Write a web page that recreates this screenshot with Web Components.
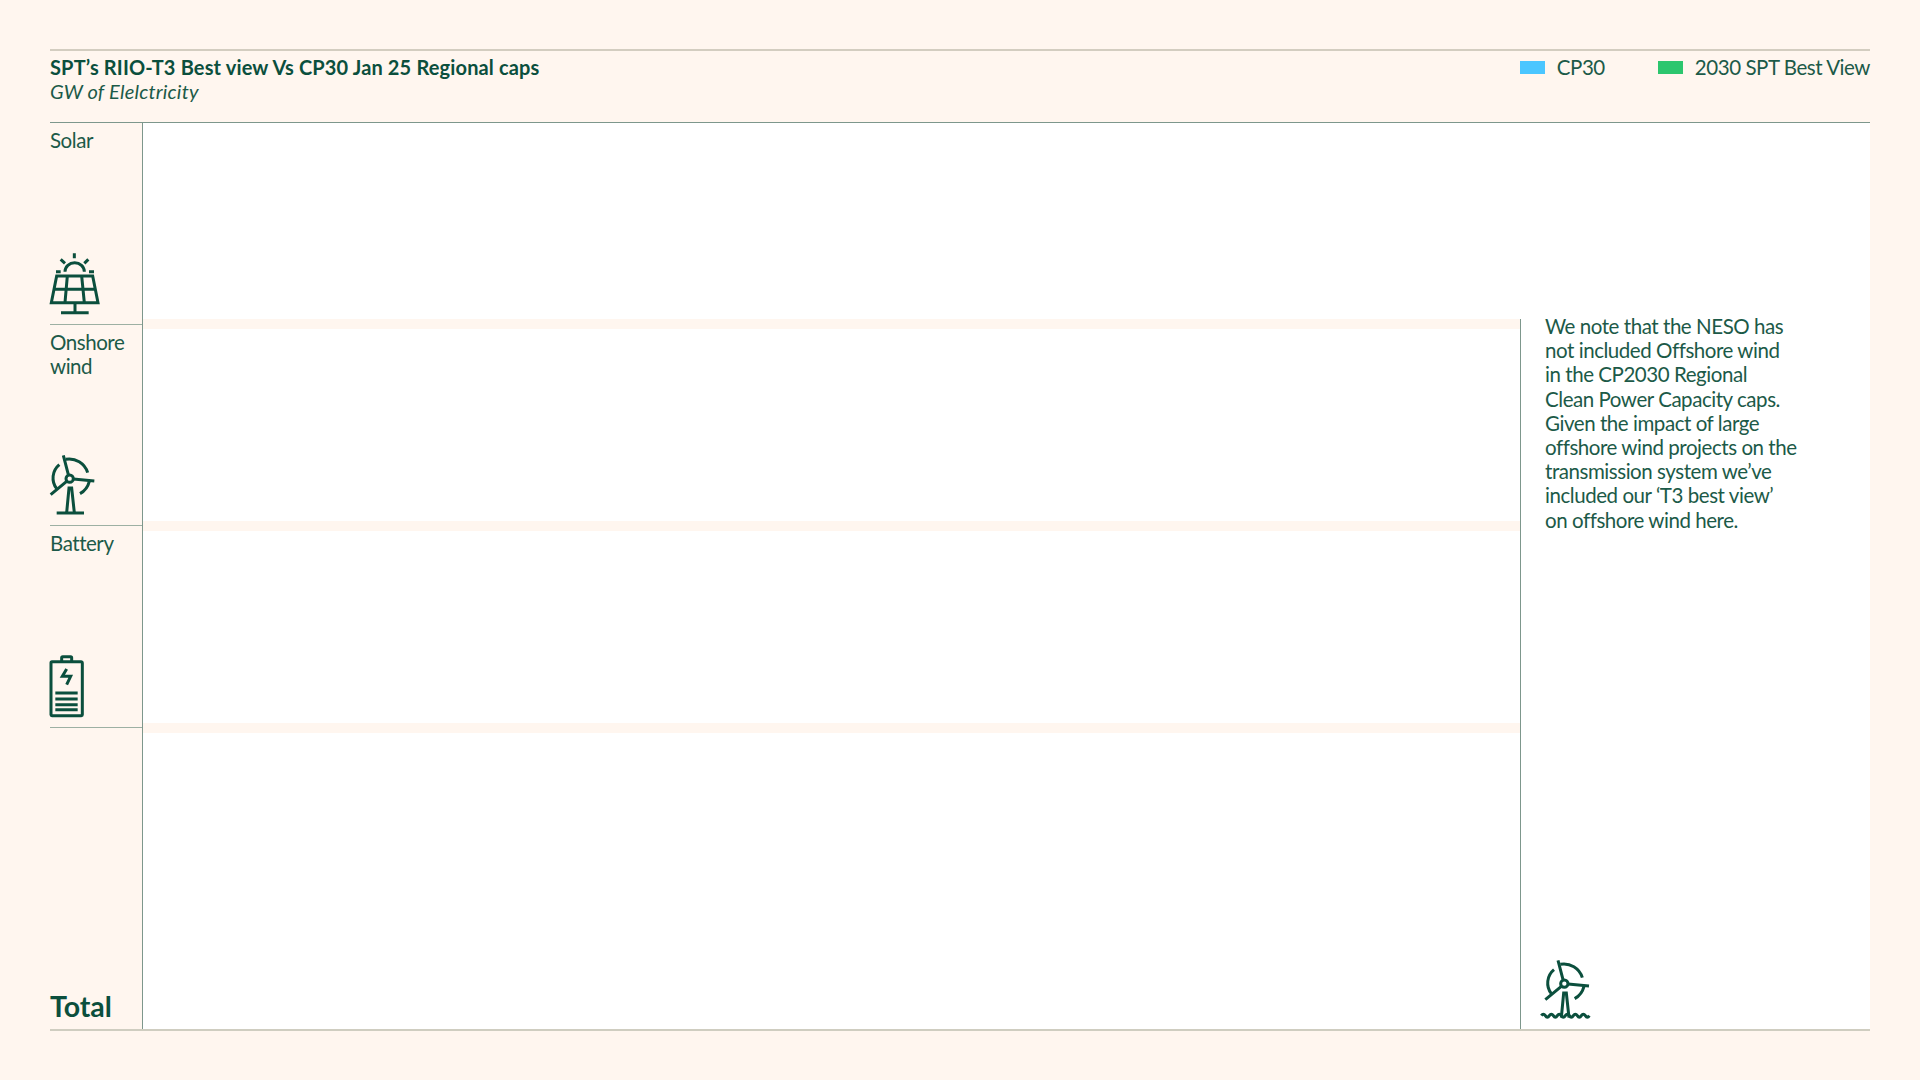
<!DOCTYPE html>
<html lang="en">
<head>
<meta charset="utf-8">
<title>SPT RIIO-T3 Best view vs CP30</title>
<style>
  html, body { margin: 0; height: 100%; }
  body {
    background: #fff6ef;
    color: #1c5a48;
    font-family: "Lato", "Liberation Sans", sans-serif;
    font-size: 20.5px;
    letter-spacing: -0.45px;
    line-height: 24.2px;
  }
</style>
</head>
<body>
<chart-page>
  <chart-header slot="header" title="SPT’s RIIO-T3 Best view Vs CP30 Jan 25 Regional caps" subtitle="GW of Elelctricity">
    <legend-item color="#4bc6ff">CP30</legend-item>
    <legend-item color="#2cc66e">2030 SPT Best View</legend-item>
  </chart-header>
  <row-label slot="labels">Solar<chart-icon slot="icon" name="solar"></chart-icon></row-label>
  <row-label slot="labels">Onshore<br>wind<chart-icon slot="icon" name="wind"></chart-icon></row-label>
  <row-label slot="labels">Battery<chart-icon slot="icon" name="battery"></chart-icon></row-label>
  <row-label slot="labels" total>Total</row-label>
  <side-note slot="note">
    We note that the NESO has<br>
    not included Offshore wind<br>
    in the CP2030 Regional<br>
    Clean Power Capacity caps.<br>
    Given the impact of large<br>
    offshore wind projects on the<br>
    transmission system we’ve<br>
    included our ‘T3 best view’<br>
    on offshore wind here.
    <chart-icon slot="icon" name="offshore"></chart-icon>
  </side-note>
</chart-page>

<script>
const windStrokes = `
  <circle cx="119" cy="120" r="11"/>
  <path d="M115 108 100 50M130 121 193 127M110 128 62 168"/>
  <path d="M107 62A58 58 0 0 1 173 102M88 78A52 52 0 0 0 80 150M178 128A59 59 0 0 1 150 165"/>
  <path d="M110 222 117 148H125L133 222"/>`;

const icons = {
  solar: {
    box: "60 36 150 186",
    body: `
      <path d="M133 40V55M92 58 105 70M175 58 163 70M78 95H92M177 95H192"/>
      <path d="M105 95A29 27 0 0 1 163 95"/>
      <path d="M80 108H188L204 188H64ZM72 148H196M112 108 105 188M155 108 163 188"/>
      <path d="M135 188V218M93 218H176"/>`,
  },
  wind: {
    box: "60 46 136 182",
    body: `${windStrokes}<path d="M80 223H162"/>`,
  },
  battery: {
    box: "60 48 100 185",
    body: `
      <rect x="63" y="68" width="94" height="162" rx="3"/>
      <path d="M95 68V56Q95 53 98 53H122Q125 53 125 56V68"/>
      <path d="M110 90 97 112H122L110 137"/>
      <path d="M76 162H143M76 180H143M76 197H143M76 212H143"/>`,
  },
  offshore: {
    box: "122 58 150 178",
    body: `
      <g transform="translate(76 12)">${windStrokes}</g>
      <path d="M126 228q6 -9 12 0t12 0 12 0 12 0 12 0 12 0 12 0 12 0 12 0 12 0 12 0 12 0"/>`,
  },
};

class ChartIcon extends HTMLElement {
  connectedCallback() {
    const icon = icons[this.getAttribute("name")];
    const [, , w, h] = icon.box.split(" ").map(Number);
    this.attachShadow({ mode: "open" });
    this.shadowRoot.innerHTML = `
      <style>
        :host { display: block; }
        svg {
          display: block;
          overflow: visible;
          fill: none;
          stroke: #0b4f3d;
          stroke-width: 9;
        }
      </style>
      <svg viewBox="${icon.box}" width="${w / 3}" height="${h / 3}">${icon.body}</svg>
    `;
  }
}

class LegendItem extends HTMLElement {
  constructor() {
    super();
    this.attachShadow({ mode: "open" });
    this.shadowRoot.innerHTML = `
      <style>
        :host { display: flex; align-items: center; gap: 12px; }
        .swatch { width: 25px; height: 13px; }
      </style>
      <span class="swatch"></span><slot></slot>
    `;
  }

  connectedCallback() {
    this.shadowRoot.querySelector(".swatch").style.background = this.getAttribute("color");
  }
}

class ChartHeader extends HTMLElement {
  constructor() {
    super();
    this.attachShadow({ mode: "open" });
    this.shadowRoot.innerHTML = `
      <style>
        :host {
          display: flex;
          justify-content: space-between;
          align-items: flex-start;
          height: 73px;
          box-sizing: border-box;
          padding-top: 4px;
          border-top: 2px solid #d3cdc0;
        }
        .title { color: #0b4f3d; font-size: 20px; font-weight: 700; letter-spacing: 0.15px; }
        .subtitle { font-size: 20px; font-style: italic; letter-spacing: 0.2px; }
        .legend { display: flex; gap: 53px; }
      </style>
      <div>
        <div class="title"></div>
        <div class="subtitle"></div>
      </div>
      <div class="legend"><slot></slot></div>
    `;
  }

  connectedCallback() {
    this.shadowRoot.querySelector(".title").textContent = this.getAttribute("title");
    this.shadowRoot.querySelector(".subtitle").textContent = this.getAttribute("subtitle");
    this.removeAttribute("title");
  }
}

class RowLabel extends HTMLElement {
  constructor() {
    super();
    this.attachShadow({ mode: "open" });
    this.shadowRoot.innerHTML = `
      <style>
        :host {
          display: flex;
          flex-direction: column;
          justify-content: space-between;
          box-sizing: border-box;
          padding: 5px 0 10px;
          border-bottom: 1px solid #9db0a3;
        }
        :host([total]) {
          justify-content: flex-end;
          border-bottom: 0;
          padding-bottom: 11px;
          color: #0b4f3d;
          font-size: 28.5px;
          font-weight: 700;
          letter-spacing: 0;
        }
      </style>
      <div><slot></slot></div>
      <slot name="icon"></slot>
    `;
  }
}

class SideNote extends HTMLElement {
  constructor() {
    super();
    this.attachShadow({ mode: "open" });
    this.shadowRoot.innerHTML = `
      <style>
        :host {
          display: flex;
          flex-direction: column;
          justify-content: space-between;
          box-sizing: border-box;
          height: 100%;
          padding: 0 0 11px 24px;
          border-left: 1px solid #7d978c;
        }
        .text { margin-top: -5px; }
        ::slotted(chart-icon) { margin-left: -5px; }
      </style>
      <div class="text"><slot></slot></div>
      <slot name="icon"></slot>
    `;
  }
}

class PlotBands extends HTMLElement {
  constructor() {
    super();
    this.attachShadow({ mode: "open" });
    this.shadowRoot.innerHTML = `
      <style>
        :host { display: flex; flex-direction: column; gap: 192px; }
        div { height: 10px; background: #fff6ef; }
      </style>
      <div></div><div></div><div></div>
    `;
  }
}

class ChartPage extends HTMLElement {
  constructor() {
    super();
    this.attachShadow({ mode: "open" });
    this.shadowRoot.innerHTML = `
      <style>
        :host {
          display: block;
          box-sizing: border-box;
          height: 1080px;
          padding: 49px 50px 0;
        }
        .body {
          display: grid;
          grid-template-columns: 92px 1fr;
          height: 909px;
          box-sizing: border-box;
          border-top: 1px solid #7d978c;
          border-bottom: 2px solid #cfcdc0;
        }
        .labels {
          display: grid;
          grid-template-rows: 202px 201px 202px 1fr;
        }
        .panel {
          display: grid;
          grid-template-columns: 1fr 350px;
          grid-template-rows: 196px 1fr;
          background: #fff;
          border-left: 1px solid #7d978c;
        }
        plot-bands { grid-row: 2; grid-column: 1; }
        .note { grid-row: 2; grid-column: 2; min-height: 0; }
      </style>
      <slot name="header"></slot>
      <div class="body">
        <div class="labels"><slot name="labels"></slot></div>
        <div class="panel">
          <plot-bands></plot-bands>
          <div class="note"><slot name="note"></slot></div>
        </div>
      </div>
    `;
  }
}

customElements.define("chart-icon", ChartIcon);
customElements.define("legend-item", LegendItem);
customElements.define("chart-header", ChartHeader);
customElements.define("row-label", RowLabel);
customElements.define("side-note", SideNote);
customElements.define("plot-bands", PlotBands);
customElements.define("chart-page", ChartPage);
</script>
</body>
</html>
